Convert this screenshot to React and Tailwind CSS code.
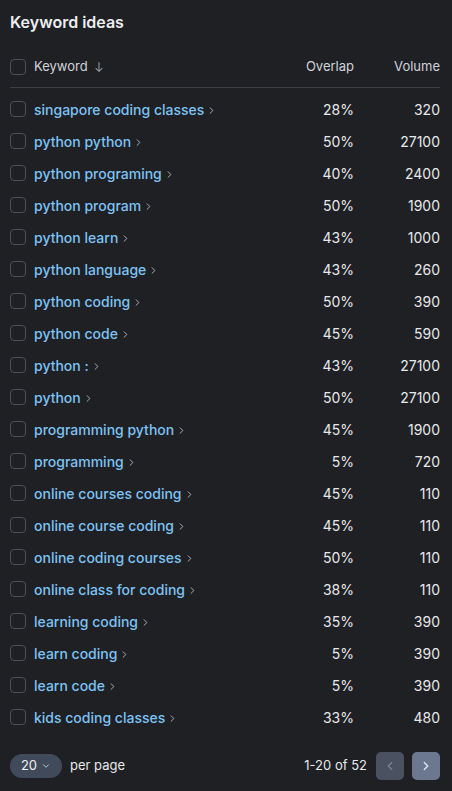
import React from 'react';

const ROWS = [
  ['singapore coding classes', '28%', '320'],
  ['python python', '50%', '27100'],
  ['python programing', '40%', '2400'],
  ['python program', '50%', '1900'],
  ['python learn', '43%', '1000'],
  ['python language', '43%', '260'],
  ['python coding', '50%', '390'],
  ['python code', '45%', '590'],
  ['python :', '43%', '27100'],
  ['python', '50%', '27100'],
  ['programming python', '45%', '1900'],
  ['programming', '5%', '720'],
  ['online courses coding', '45%', '110'],
  ['online course coding', '45%', '110'],
  ['online coding courses', '50%', '110'],
  ['online class for coding', '38%', '110'],
  ['learning coding', '35%', '390'],
  ['learn coding', '5%', '390'],
  ['learn code', '5%', '390'],
  ['kids coding classes', '33%', '480'],
];

const Box = () => (
  <span className="w-4 h-4 rounded-[4px] border border-[#4b5058] shrink-0" />
);

const Chevron = ({ className = '' }) => (
  <svg viewBox="0 0 16 16" className={className} fill="none" stroke="currentColor" strokeWidth="1.4" strokeLinecap="round" strokeLinejoin="round">
    <path d="M6 4l4 4-4 4" />
  </svg>
);

export default function App() {
  return (
    <div
      className="w-[452px] h-[791px] bg-[#1f2024] pl-[10px] pr-[12px] flex flex-col text-[#e6e8eb]"
      style={{ fontFamily: 'Inter, "Noto Sans", sans-serif' }}
    >
      <h1 className="pt-[11px] text-[16px] leading-[22px] font-semibold text-[#eceef1]">Keyword ideas</h1>

      {/* header */}
      <div className="mt-[14px] h-[41px] flex items-center border-b border-[#3a3e45] text-[13px] text-[#cfd3d9]">
        <Box />
        <span className="ml-2">Keyword</span>
        <svg viewBox="0 0 16 16" className="w-[14px] h-[14px] ml-1 text-[#8b9099]" fill="none" stroke="currentColor" strokeWidth="1.3" strokeLinecap="round" strokeLinejoin="round">
          <path d="M8 3v10M4.5 9.5L8 13l3.5-3.5" />
        </svg>
        <span className="ml-auto w-[80px] text-right">Overlap</span>
        <span className="w-[86px] text-right">Volume</span>
      </div>

      {/* rows */}
      <div className="pt-[5px] flex flex-col">
        {ROWS.map(([kw, ov, vol]) => (
          <div key={kw} className="h-8 flex items-center text-[14px]">
            <Box />
            <span className="ml-2 font-medium text-[#7dc3f5]">{kw}</span>
            <Chevron className="w-[11px] h-[11px] ml-[2px] mt-[2px] text-[#aab0b8]" />
            <span className="ml-auto w-[80px] text-right">{ov}</span>
            <span className="w-[86px] text-right">{vol}</span>
          </div>
        ))}
      </div>

      {/* footer */}
      <div className="mt-[19px] flex items-center text-[13px]">
        <button className="h-6 w-[52px] rounded-full bg-[#414a5a] flex items-center justify-center gap-1 text-[#eef0f3]">
          <span className="text-[13px]">20</span>
          <svg viewBox="0 0 16 16" className="w-[10px] h-[10px] text-[#c7ccd3]" fill="none" stroke="currentColor" strokeWidth="1.5" strokeLinecap="round" strokeLinejoin="round">
            <path d="M4 6l4 4 4-4" />
          </svg>
        </button>
        <span className="ml-2 text-[#e6e8eb]">per page</span>
        <span className="ml-auto text-[#e6e8eb]">1-20 of 52</span>
        <button className="ml-[9px] w-7 h-7 rounded-[5px] bg-[#4a5160] flex items-center justify-center text-[#7d8594]">
          <Chevron className="w-[14px] h-[14px] rotate-180" />
        </button>
        <button className="ml-2 w-7 h-7 rounded-[5px] bg-[#6b788f] flex items-center justify-center text-[#e8ebf0]">
          <Chevron className="w-[14px] h-[14px]" />
        </button>
      </div>
    </div>
  );
}
